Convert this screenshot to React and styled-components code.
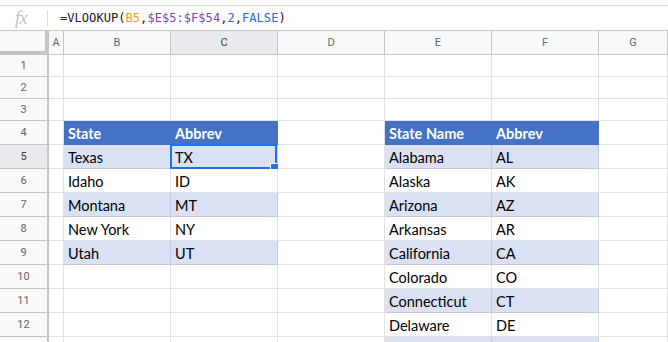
import React from "react";
import styled, { createGlobalStyle, css } from "styled-components";

const Global = createGlobalStyle`
  html, body { margin: 0; padding: 0; background: #fff; overflow: hidden; }
  #root { width: 668px; height: 342px; overflow: hidden; }
`;

const COLS = "49px 15px repeat(5, 107px) 1fr";

const Page = styled.div`
  width: 668px;
  height: 342px;
  overflow: hidden;
  background: #fff;
`;

const FormulaBar = styled.div`
  margin-top: 5px;
  height: 24px;
  border-top: 1px solid #dadce0;
  border-bottom: 1px solid #c4c7c5;
  display: flex;
  align-items: center;
`;

const Fx = styled.div`
  width: 47px;
  padding-left: 15px;
  box-sizing: border-box;
  font-family: "Liberation Serif", serif;
  font-style: italic;
  font-size: 19px;
  color: #c4c4c4;
  letter-spacing: -1px;
  line-height: 24px;
`;

const Sep = styled.div`
  width: 1px;
  height: 16px;
  background: #dadce0;
  margin-right: 12px;
`;

const Formula = styled.div`
  font-family: "DejaVu Sans Mono", "Liberation Mono", monospace;
  font-size: 12.1px;
  color: #202124;
  white-space: pre;
`;

const Tok = styled.span`
  color: ${(p) => p.$c || "#202124"};
`;

const Row = styled.div`
  display: grid;
  grid-template-columns: ${COLS};
  height: ${(p) => p.$h}px;
`;

const Corner = styled.div`
  background: #f8f9fa;
  border-right: 4px solid #c4c4c4;
  border-bottom: 4px solid #c4c4c4;
`;

const ColHead = styled.div`
  background: ${(p) => (p.$active ? "#e8eaed" : "#f8f9fa")};
  border-right: 1px solid #c4c4c4;
  border-bottom: 1px solid #c4c4c4;
  display: flex;
  align-items: center;
  justify-content: center;
  font-family: Roboto, "Liberation Sans", sans-serif;
  font-size: 11px;
  color: ${(p) => (p.$active ? "#3c4043" : "#666")};
`;

const RowHead = styled.div`
  background: ${(p) => (p.$active ? "#e8eaed" : "#f8f9fa")};
  border-right: 2px solid #c4c4c4;
  border-bottom: 1px solid #c4c4c4;
  display: flex;
  align-items: center;
  justify-content: center;
  font-family: Roboto, "Liberation Sans", sans-serif;
  font-size: 11px;
  color: ${(p) => (p.$active ? "#3c4043" : "#666")};
  box-sizing: border-box;
`;

const variants = {
  plain: css`
    background: #fff;
    border-color: #e2e2e2;
  `,
  head: css`
    background: #4472c4;
    border-color: #4472c4;
    color: #fff;
    font-weight: 700;
  `,
  band: css`
    background: #d9e1f2;
    border-color: #c2cadf;
  `,
  white: css`
    background: #fff;
    border-color: #e2e2e2;
  `,
};

const Cell = styled.div`
  position: relative;
  box-sizing: border-box;
  border-right: 1px solid;
  border-bottom: 1px solid;
  padding-left: 4px;
  font-family: Lato, "Open Sans", sans-serif;
  font-size: 14.5px;
  color: #000;
  display: flex;
  align-items: center;
  padding-top: 2px;
  white-space: nowrap;
  ${(p) => variants[p.$v || "plain"]}
`;

const Selection = styled.div`
  position: absolute;
  left: -1px;
  top: -1px;
  right: 0;
  bottom: -1px;
  border: 2px solid #1a73e8;
  pointer-events: none;
`;

const Handle = styled.div`
  position: absolute;
  right: -4px;
  bottom: -5px;
  width: 7px;
  height: 7px;
  background: #1a73e8;
  border: 1px solid #fff;
`;

const left = [
  ["State", "Abbrev"],
  ["Texas", "TX"],
  ["Idaho", "ID"],
  ["Montana", "MT"],
  ["New York", "NY"],
  ["Utah", "UT"],
];
const right = [
  ["State Name", "Abbrev"],
  ["Alabama", "AL"],
  ["Alaska", "AK"],
  ["Arizona", "AZ"],
  ["Arkansas", "AR"],
  ["California", "CA"],
  ["Colorado", "CO"],
  ["Connecticut", "CT"],
  ["Delaware", "DE"],
  ["", ""],
];

const letters = ["A", "B", "C", "D", "E", "F", "G"];

function variantFor(tableRow, len) {
  if (tableRow < 0 || tableRow >= len) return "plain";
  if (tableRow === 0) return "head";
  return tableRow % 2 === 1 ? "band" : "white";
}

export default function App() {
  const rows = [];
  for (let r = 1; r <= 13; r++) {
    const h = r <= 3 ? 22 : 24;
    const li = r - 4;
    const lv = variantFor(li, left.length);
    const rv = variantFor(li, right.length);
    const lData = li >= 0 && li < left.length ? left[li] : ["", ""];
    const rData = li >= 0 && li < right.length ? right[li] : ["", ""];
    rows.push(
      <Row key={r} $h={h}>
        <RowHead $active={r === 5}>{r < 13 ? r : ""}</RowHead>
        <Cell />
        <Cell $v={lv}>{lData[0]}</Cell>
        <Cell $v={lv}>
          {lData[1]}
          {r === 5 && (
            <Selection>
              <Handle />
            </Selection>
          )}
        </Cell>
        <Cell />
        <Cell $v={rv}>{rData[0]}</Cell>
        <Cell $v={rv}>{rData[1]}</Cell>
        <Cell />
      </Row>
    );
  }
  return (
    <Page>
      <Global />
      <FormulaBar>
        <Fx>fx</Fx>
        <Sep />
        <Formula>
          <Tok>=VLOOKUP(</Tok>
          <Tok $c="#f29b1e">B5</Tok>
          <Tok>,</Tok>
          <Tok $c="#8e3fa8">$E$5:$F$54</Tok>
          <Tok>,</Tok>
          <Tok $c="#2a6bd1">2</Tok>
          <Tok>,</Tok>
          <Tok $c="#2a6bd1">FALSE</Tok>
          <Tok>)</Tok>
        </Formula>
      </FormulaBar>
      <Row $h={24}>
        <Corner />
        {letters.map((l) => (
          <ColHead key={l} $active={l === "C"}>
            {l}
          </ColHead>
        ))}
      </Row>
      {rows}
    </Page>
  );
}
